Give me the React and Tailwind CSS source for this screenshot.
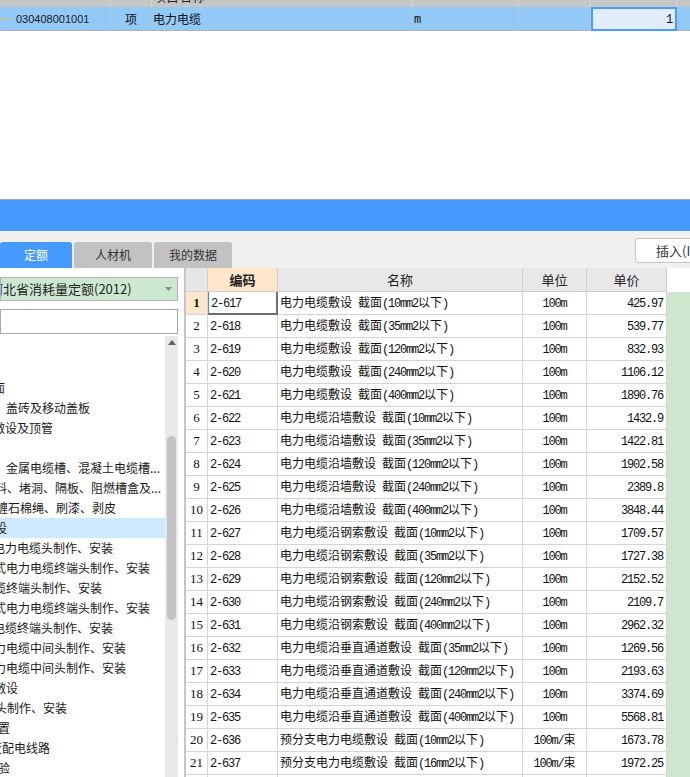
import React from "react";

const rows = [
  ["2-617", "电力电缆敷设 截面(10mm2以下)", "100m", "425.97"],
  ["2-618", "电力电缆敷设 截面(35mm2以下)", "100m", "539.77"],
  ["2-619", "电力电缆敷设 截面(120mm2以下)", "100m", "832.93"],
  ["2-620", "电力电缆敷设 截面(240mm2以下)", "100m", "1106.12"],
  ["2-621", "电力电缆敷设 截面(400mm2以下)", "100m", "1890.76"],
  ["2-622", "电力电缆沿墙敷设 截面(10mm2以下)", "100m", "1432.9"],
  ["2-623", "电力电缆沿墙敷设 截面(35mm2以下)", "100m", "1422.81"],
  ["2-624", "电力电缆沿墙敷设 截面(120mm2以下)", "100m", "1902.58"],
  ["2-625", "电力电缆沿墙敷设 截面(240mm2以下)", "100m", "2389.8"],
  ["2-626", "电力电缆沿墙敷设 截面(400mm2以下)", "100m", "3848.44"],
  ["2-627", "电力电缆沿钢索敷设 截面(10mm2以下)", "100m", "1709.57"],
  ["2-628", "电力电缆沿钢索敷设 截面(35mm2以下)", "100m", "1727.38"],
  ["2-629", "电力电缆沿钢索敷设 截面(120mm2以下)", "100m", "2152.52"],
  ["2-630", "电力电缆沿钢索敷设 截面(240mm2以下)", "100m", "2109.7"],
  ["2-631", "电力电缆沿钢索敷设 截面(400mm2以下)", "100m", "2962.32"],
  ["2-632", "电力电缆沿垂直通道敷设 截面(35mm2以下)", "100m", "1269.56"],
  ["2-633", "电力电缆沿垂直通道敷设 截面(120mm2以下)", "100m", "2193.63"],
  ["2-634", "电力电缆沿垂直通道敷设 截面(240mm2以下)", "100m", "3374.69"],
  ["2-635", "电力电缆沿垂直通道敷设 截面(400mm2以下)", "100m", "5568.81"],
  ["2-636", "预分支电力电缆敷设 截面(10mm2以下)", "100m/束", "1673.78"],
  ["2-637", "预分支电力电缆敷设 截面(16mm2以下)", "100m/束", "1972.25"],
  ["2-638", "预分支电力电缆敷设 截面(25mm2以下)", "100m/束", "2210.4"],
];

// [text, left offset class, selected]
const tree = [
  ["", "ml-0"],
  ["", "ml-0"],
  ["截面", "ml-[-19px]"],
  ["盖砖及移动盖板", "ml-[6px]"],
  ["敷设及顶管", "ml-[-7px]"],
  ["", "ml-0"],
  ["金属电缆槽、混凝土电缆槽...", "ml-[6px]"],
  ["料、堵洞、隔板、阻燃槽盒及...", "ml-[-5px]"],
  ["缠石棉绳、刷漆、剥皮", "ml-[-4px]"],
  ["敷设", "ml-[-17px]", true],
  ["电力电缆头制作、安装", "ml-[-7px]"],
  ["式电力电缆终端头制作、安装", "ml-[-6px]"],
  ["缆终端头制作、安装", "ml-[-6px]"],
  ["式电力电缆终端头制作、安装", "ml-[-6px]"],
  ["电缆终端头制作、安装", "ml-[-7px]"],
  ["力电缆中间头制作、安装", "ml-[-6px]"],
  ["力电缆中间头制作、安装", "ml-[-6px]"],
  ["敷设", "ml-[-6px]"],
  ["头制作、安装", "ml-[-5px]"],
  ["置", "ml-[-2px]"],
  ["变配电线路", "ml-[-10px]"],
  ["验", "ml-[-2px]"],
];

// ASCII runs in the grid are drawn half width, like SimSun
const Mixed = ({ text }) => {
  const parts = text.match(/[\x00-\x7f]+|[^\x00-\x7f]+/g) || [];
  return (
    <span className="whitespace-pre">
      {parts.map((p, i) =>
        /^[\x00-\x7f]/.test(p) ? (
          <span key={i} className="font-['Liberation_Mono',monospace] tracking-[-1.2px]">{p}</span>
        ) : (
          <span key={i}>{p}</span>
        )
      )}
    </span>
  );
};

const App = () => {
  return (
    <div className="w-[690px] h-[777px] overflow-hidden bg-white text-[#111] font-['Noto_Sans_CJK_SC',sans-serif]">
      {/* bill grid, scrolled to the selected line */}
      <div className="h-[31px] overflow-hidden">
        <div className="mt-[-16px] h-[23px] grid grid-cols-[111px_41px_260px_107px_72px_86px_13px] bg-[#c6c6c6] text-[13px] text-[#222]">
          <div className="border-r border-[#d6d6d6]" />
          <div className="border-r border-[#d6d6d6]" />
          <div className="border-r border-[#d6d6d6] flex items-center pl-[1px]">项目名称</div>
          <div className="border-r border-[#d6d6d6]" />
          <div className="border-r border-[#d6d6d6]" />
          <div className="border-r border-[#d6d6d6]" />
          <div />
        </div>
        <div className="h-[24px] grid grid-cols-[111px_41px_260px_107px_72px_86px_13px] bg-[#93c9f6] border-b border-[#b3b3b3] text-[12px]">
          <div className="flex items-center border-r border-[#b7c4d0]">
            <span className="w-[10px] h-[1px] bg-[#f2b862]" />
            <span className="ml-[6px] font-['Liberation_Sans',sans-serif] text-[11px] text-[#1a1a1a]">030408001001</span>
          </div>
          <div className="flex items-center justify-center border-r border-[#b7c4d0]">项</div>
          <div className="flex items-center pl-[1px] border-r border-[#b7c4d0]">电力电缆</div>
          <div className="flex items-center pl-[2px] border-r border-[#b7c4d0]">
            <Mixed text="m" />
          </div>
          <div className="border-r border-[#b7c4d0]" />
          <div className="flex items-center justify-end pr-[3px] bg-[#e1ecfd] border-2 border-[#4a9bff]">
            <Mixed text="1" />
          </div>
          <div />
        </div>
      </div>

      <div className="h-[169px] border-b border-[#a9a9a9]" />
      <div className="h-[31px] bg-[#4599ff]" />

      {/* tab strip */}
      <div className="h-[37px] bg-[#f0f0f0] flex items-end">
        <div className="flex gap-[2px] h-[26px] text-[12px]">
          <div className="w-[72px] rounded-t-[3px] bg-[#4599ff] text-white flex items-center justify-center">定额</div>
          <div className="w-[78px] rounded-t-[3px] bg-[#c2c2c2] text-[#333] flex items-center justify-center">人材机</div>
          <div className="w-[78px] rounded-t-[3px] bg-[#c2c2c2] text-[#333] flex items-center justify-center">我的数据</div>
        </div>
        <div className="ml-auto mr-[-30px] mb-[5px] w-[85px] h-[25px] bg-white border border-[#c4c4c4] rounded-[3px] flex items-center pl-[20px] text-[13px] text-[#333] whitespace-nowrap">
          插入(I)
        </div>
      </div>

      <div className="flex h-[509px]">
        {/* quota tree */}
        <div className="w-[184px] bg-white flex flex-col">
          <div className="w-[178px] mt-[9px] h-[24px] bg-[#cde8d1] border border-[#b2b2b2] flex items-center overflow-hidden">
            <span className="ml-[-11px] text-[13px] text-[#222] whitespace-nowrap">河北省消耗量定额(2012)</span>
            <svg className="ml-auto mr-[5px] shrink-0" width="7" height="4" viewBox="0 0 7 4">
              <path d="M0 0h7L3.5 4z" fill="#8a8a8a" />
            </svg>
          </div>
          <div className="w-[178px] mt-[8px] h-[25px] bg-white border border-[#a9a9a9]" />
          <div className="mt-[2px] flex flex-1 min-h-0">
            <div className="w-[165px] pt-[2px] overflow-hidden text-[12px] text-[#1a1a1a]">
              {tree.map(([t, off, sel], i) => (
                <div key={i} className={`h-[20px] flex items-center whitespace-nowrap ${sel ? "bg-[#cde8ff]" : ""}`}>
                  <span className={off}>{t}</span>
                </div>
              ))}
            </div>
            <div className="w-[13px] bg-[#e8e8e8] flex flex-col items-center">
              <svg className="mt-[4px]" width="8" height="5" viewBox="0 0 8 5">
                <path d="M4 0l4 5H0z" fill="#5e5e5e" />
              </svg>
              <div className="mt-[91px] w-[9px] h-[184px] rounded-[5px] bg-[#c2c2c2]" />
            </div>
          </div>
        </div>
        <div className="w-[2px] bg-[#c6c6c6]" />

        {/* quota grid */}
        <div className="flex-1 overflow-hidden text-[12px]">
          <div className="grid grid-cols-[22px_70px_245px_64px_80px_1fr] h-[24px] text-[13px] text-[#222]">
            <div className="bg-[#e6e6e6] border-r border-b border-[#cfcfcf]" />
            <div className="bg-[#fde6c9] border-r border-b border-[#cfcfcf] flex items-center justify-center font-bold">编码</div>
            <div className="bg-[#e8e8e8] border-r border-b border-[#cfcfcf] flex items-center justify-center">名称</div>
            <div className="bg-[#e8e8e8] border-r border-b border-[#cfcfcf] flex items-center justify-center">单位</div>
            <div className="bg-[#e8e8e8] border-r border-b border-[#cfcfcf] flex items-center justify-center">单价</div>
            <div className="bg-white" />
          </div>
          {rows.map((r, i) => (
            <div key={r[0]} className="grid grid-cols-[22px_70px_245px_64px_80px_1fr] h-[23px]">
              <div className={`flex items-center justify-center border-r border-b border-[#d4d4d4] font-['Liberation_Serif',serif] text-[13px] ${i === 0 ? "bg-[#fde6c9] font-bold" : "bg-white"}`}>
                {i + 1}
              </div>
              <div className={`flex items-center pl-[2px] border-b border-[#d4d4d4] ${i === 0 ? "border-l border-l-[#3d8ee8] border-r-2 border-r-[#6e6e6e] border-b-2 border-b-[#6e6e6e]" : "border-r"}`}>
                <Mixed text={r[0]} />
              </div>
              <div className="flex items-center pl-[2px] border-r border-b border-[#d4d4d4] whitespace-nowrap overflow-hidden">
                <Mixed text={r[1]} />
              </div>
              <div className="flex items-center justify-center border-r border-b border-[#d4d4d4] whitespace-nowrap">
                <Mixed text={r[2]} />
              </div>
              <div className="flex items-center justify-end pr-[3px] border-r border-b border-[#d4d4d4]">
                <Mixed text={r[3]} />
              </div>
              <div className="bg-[#cde7cf]" />
            </div>
          ))}
        </div>
      </div>
    </div>
  );
};

export default App;
